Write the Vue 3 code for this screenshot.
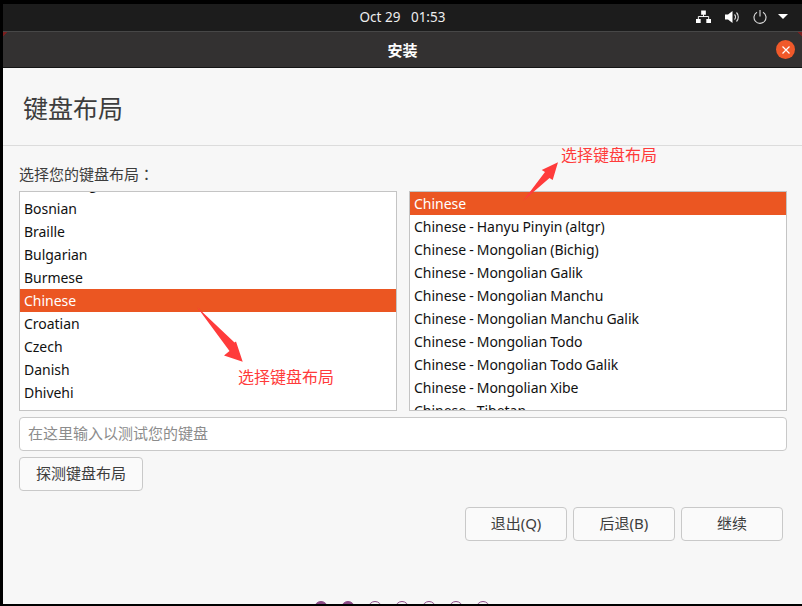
<script setup>
const leftItems = ['Berber (Algeria, Latin)', 'Bosnian', 'Braille', 'Bulgarian', 'Burmese', 'Chinese', 'Croatian', 'Czech', 'Danish', 'Dhivehi', 'Dutch']
const rightItems = [
  'Chinese',
  'Chinese - Hanyu Pinyin (altgr)',
  'Chinese - Mongolian (Bichig)',
  'Chinese - Mongolian Galik',
  'Chinese - Mongolian Manchu',
  'Chinese - Mongolian Manchu Galik',
  'Chinese - Mongolian Todo',
  'Chinese - Mongolian Todo Galik',
  'Chinese - Mongolian Xibe',
  'Chinese - Tibetan'
]
const steps = [true, true, false, false, false, false, false]
</script>

<template>
  <div class="screen">
    <div class="topbar">
      <div class="clock">Oct 29&nbsp;&nbsp;&nbsp;01:53</div>
      <div class="tray">
        <svg class="net" width="15" height="14" viewBox="0 0 16 14">
          <path d="M5.5 0h5v4.5h-5zM0 9h5v4.5H0zM11 9h5v4.5h-5z" fill="#fff" />
          <path d="M8 4v3M2.5 9.5V6.5h11v3" fill="none" stroke="#fff" stroke-width="1" />
        </svg>
        <svg class="vol" width="15" height="14" viewBox="0 0 15 14">
          <path d="M0 4.5h3L7.5 1v12L3 9.5H0z" fill="#fff" />
          <path d="M9.5 4.5a3.5 3.5 0 0 1 0 5M11.5 2.5a6.5 6.5 0 0 1 0 9" fill="none" stroke="#ddd" stroke-width="1.1" />
        </svg>
        <svg class="power" width="14" height="14" viewBox="0 0 14 14">
          <path d="M4 2.2a6 6 0 1 0 6 0M7 0v6.5" fill="none" stroke="#ddd" stroke-width="1.1" />
        </svg>
        <svg class="caret" width="10" height="5" viewBox="0 0 10 5">
          <path d="M0 0h10L5 5z" fill="#fff" />
        </svg>
      </div>
    </div>

    <div class="titlebar">
      <span class="title">安装</span>
      <div class="close">
        <svg width="10" height="10" viewBox="0 0 10 10">
          <path d="M1.5 1.5l7 7M8.5 1.5l-7 7" stroke="#fff" stroke-width="1.2" />
        </svg>
      </div>
    </div>

    <div class="page">
      <h1 class="heading">键盘布局</h1>
      <div class="content">
        <div class="label">选择您的键盘布局<span class="colon">：</span></div>
        <div class="lists">
          <div class="list">
            <div class="rows rows-left">
              <div v-for="item in leftItems" :key="item" class="row" :class="{ selected: item === 'Chinese' }">{{ item }}</div>
            </div>
            <svg class="arrow arrow-down" width="48" height="57" viewBox="0 0 48 57">
              <path d="M1 1L38.5 36.5 40 35.5 46.7 55.7 28 49.5 33.5 45z" fill="#ff3b3b" />
            </svg>
            <span class="note note-left">选择键盘布局</span>
          </div>
          <div class="list">
            <div class="rows">
              <div v-for="(item, i) in rightItems" :key="item" class="row" :class="{ selected: i === 0 }">{{ item }}</div>
            </div>
          </div>
          <svg class="arrow arrow-up" width="37" height="40" viewBox="0 0 37 40">
            <path d="M1 39L23 10 19.7 8 36 .3 30.7 18 27.5 16z" fill="#ff3b3b" />
          </svg>
          <span class="note note-right">选择键盘布局</span>
        </div>
        <input class="test-input" type="text" placeholder="在这里输入以测试您的键盘" />
        <button class="btn detect">探测键盘布局</button>
        <div class="actions">
          <button class="btn action">退出(Q)</button>
          <button class="btn action">后退(B)</button>
          <button class="btn action">继续</button>
        </div>
      </div>
      <div class="steps">
        <span v-for="(done, i) in steps" :key="i" class="dot" :class="{ done }"></span>
      </div>
    </div>
  </div>
</template>

<style>
html, body {
  margin: 0;
  background: #000;
}
</style>

<style scoped>
.screen {
  width: 802px;
  height: 606px;
  box-sizing: border-box;
  padding: 4px 0 2px 3px;
  background: #000;
  display: flex;
  flex-direction: column;
  overflow: hidden;
  font-family: "Noto Sans", "Noto Sans CJK SC", sans-serif;
  font-size: 15px;
}
.topbar {
  height: 27px;
  flex: none;
  background: #1c1c1c;
  color: #eee;
  display: flex;
  align-items: center;
  position: relative;
}
.clock {
  width: 100%;
  text-align: center;
  font-size: 13.5px;
  padding-bottom: 2px;
}
.tray {
  position: absolute;
  right: 0;
  top: 0;
  height: 25px;
  display: flex;
  align-items: center;
}
.tray svg {
  flex: none;
}
.tray .net {
  margin-right: 14px;
}
.tray .vol {
  margin-right: 13px;
}
.tray .power {
  margin-right: 11px;
}
.tray .caret {
  margin-right: 14px;
}
.titlebar {
  height: 37px;
  box-sizing: border-box;
  flex: none;
  background:
    linear-gradient(135deg, #7a1f1f 3px, transparent 3px),
    linear-gradient(225deg, #7a1f1f 3px, transparent 3px),
    #333131;
  border-top: 1px solid #474747;
  border-bottom: 1px solid #151515;
  color: #fff;
  display: flex;
  align-items: center;
  justify-content: center;
  position: relative;
}
.title {
  font-weight: 700;
  font-size: 15px;
}
.close {
  position: absolute;
  right: 7px;
  top: 8px;
  width: 19px;
  height: 19px;
  border-radius: 50%;
  background: #f0592a;
  display: flex;
  align-items: center;
  justify-content: center;
}
.page {
  flex: 1;
  background: #f7f7f7;
  display: flex;
  flex-direction: column;
  position: relative;
  overflow: hidden;
}
.heading {
  margin: 0;
  height: 78px;
  box-sizing: border-box;
  border-bottom: 1px solid #dcdcdc;
  padding: 23px 0 0 20px;
  font-size: 25px;
  line-height: 34px;
  font-weight: 400;
  color: #3d3d3d;
}
.content {
  padding: 17px 15px 0 16px;
  display: flex;
  flex-direction: column;
}
.label {
  height: 28px;
  line-height: 22px;
  color: #3d3d3d;
}
.colon {
  font-family: "Noto Sans CJK TC", sans-serif;
}
.lists {
  display: flex;
  gap: 12px;
  position: relative;
}
.list {
  width: 378px;
  height: 220px;
  box-sizing: border-box;
  border: 1px solid #c4c4c4;
  background: #fff;
  overflow: hidden;
  position: relative;
}
.rows-left {
  margin-top: -18px;
}
/* only the descenders of the scrolled-away row peek out */
.rows-left .row:first-child {
  line-height: 19px;
}
.row {
  height: 23px;
  line-height: 23px;
  padding-left: 4px;
  color: #111;
  white-space: nowrap;
  font-size: 14px;
  word-spacing: -0.5px;
  letter-spacing: -0.03px;
}
.row.selected {
  background: #eb5622;
  color: #fff;
}
.arrow {
  position: absolute;
}
.arrow-down {
  left: 176px;
  top: 114px;
}
.note {
  position: absolute;
  color: #ff3b3b;
  font-size: 16px;
  line-height: 22px;
  white-space: nowrap;
}
.note-left {
  left: 218px;
  top: 174px;
}
.arrow-up {
  left: 503px;
  top: -29px;
}
.note-right {
  left: 542px;
  top: -47px;
}
.test-input {
  margin-top: 6px;
  width: 768px;
  height: 34px;
  box-sizing: border-box;
  border: 1px solid #c9c9c9;
  border-radius: 4px;
  background: #fff;
  padding: 0 8px 2px;
  font: inherit;
  outline: none;
}
.test-input::placeholder {
  color: #8c8c8c;
  opacity: 1;
}
.btn {
  height: 34px;
  box-sizing: border-box;
  border: 1px solid #c9c9c9;
  border-radius: 4px;
  background: #fafafa;
  color: #3d3d3d;
  font: inherit;
  padding: 0 0 3px;
}
.detect {
  margin-top: 6px;
  width: 124px;
}
.actions {
  display: flex;
  justify-content: flex-end;
  gap: 6px;
  margin-top: 16px;
  padding-right: 4px;
}
.action {
  width: 102px;
}
.steps {
  position: absolute;
  left: 311px;
  bottom: -11px;
  display: flex;
  gap: 13px;
}
.dot {
  width: 14px;
  height: 14px;
  box-sizing: border-box;
  border-radius: 50%;
  border: 1px solid #8a4a85;
}
.dot.done {
  background: #8a4a85;
}
</style>
